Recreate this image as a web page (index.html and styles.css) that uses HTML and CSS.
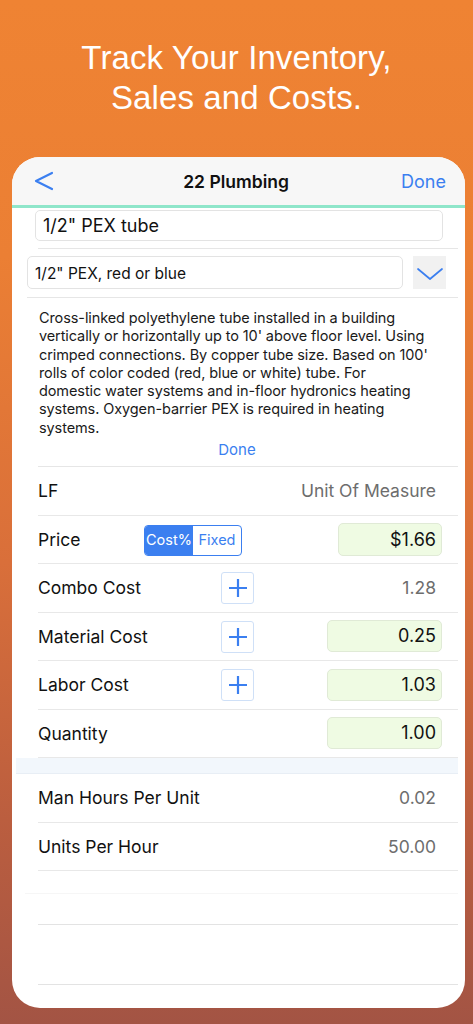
FILE: index.html
```html
<!DOCTYPE html>
<html>
<head>
<meta charset="utf-8">
<link rel="stylesheet" href="styles.css">
</head>
<body>
<div class="page">
  <h1 class="headline">Track Your Inventory,<br>Sales and Costs.</h1>
  <div class="card">
    <div class="nav">
      <svg class="back" width="22" height="22" viewBox="0 0 22 22"><path d="M19 3 L3 11 L19 19" fill="none" stroke="#3b7ff0" stroke-width="2.2" stroke-linecap="round" stroke-linejoin="round"/></svg>
      <div class="nav-title">22 Plumbing</div>
      <div class="nav-done">Done</div>
    </div>
    <div class="sec sec-name">
      <div class="namebox">1/2" PEX tube</div>
    </div>
    <div class="sec sec-sub">
      <div class="subbox">1/2" PEX, red or blue</div>
      <div class="chev"><svg width="28" height="16" viewBox="0 0 28 16"><path d="M2 3 L14 13 L26 3" fill="none" stroke="#3b7ff0" stroke-width="1.7" stroke-linecap="round" stroke-linejoin="round"/></svg></div>
    </div>
    <div class="sec sec-desc">
      <p class="desc">Cross-linked polyethylene tube installed in a building<br>vertically or horizontally up to 10' above floor level. Using<br>crimped connections. By copper tube size. Based on 100'<br>rolls of color coded (red, blue or white) tube. For<br>domestic water systems and in-floor hydronics heating<br>systems. Oxygen-barrier PEX is required in heating<br>systems.</p>
      <div class="desc-done">Done</div>
    </div>
    <div class="row">
      <span class="label">LF</span>
      <span class="value">Unit Of Measure</span>
    </div>
    <div class="row">
      <span class="label">Price</span>
      <div class="seg"><span class="seg-on">Cost%</span><span class="seg-off">Fixed</span></div>
      <span class="input input-price">$1.66</span>
    </div>
    <div class="row">
      <span class="label">Combo Cost</span>
      <span class="plus"><svg width="20" height="20" viewBox="0 0 20 20"><path d="M10 1 V19 M1 10 H19" stroke="#3b7ff0" stroke-width="2.2"/></svg></span>
      <span class="value">1.28</span>
    </div>
    <div class="row">
      <span class="label">Material Cost</span>
      <span class="plus"><svg width="20" height="20" viewBox="0 0 20 20"><path d="M10 1 V19 M1 10 H19" stroke="#3b7ff0" stroke-width="2.2"/></svg></span>
      <span class="input">0.25</span>
    </div>
    <div class="row">
      <span class="label">Labor Cost</span>
      <span class="plus"><svg width="20" height="20" viewBox="0 0 20 20"><path d="M10 1 V19 M1 10 H19" stroke="#3b7ff0" stroke-width="2.2"/></svg></span>
      <span class="input">1.03</span>
    </div>
    <div class="row">
      <span class="label">Quantity</span>
      <span class="input">1.00</span>
    </div>
    <div class="band"></div>
    <div class="row">
      <span class="label">Man Hours Per Unit</span>
      <span class="value">0.02</span>
    </div>
    <div class="row">
      <span class="label">Units Per Hour</span>
      <span class="value">50.00</span>
    </div>
    <div class="empty empty-a"></div>
    <div class="empty empty-b"></div>
    <div class="empty empty-c"></div>
  </div>
</div>
</body>
</html>
```
FILE: styles.css
```css
* { box-sizing: border-box; }
html, body { margin: 0; padding: 0; }
body {
  width: 473px;
  height: 1024px;
  overflow: hidden;
  font-family: Inter, "Noto Sans", "Liberation Sans", sans-serif;
  background: linear-gradient(180deg, #ef8333 0%, #eb7f34 25%, #d96f3a 55%, #bb5e3f 80%, #a35444 100%);
}
.page {
  padding-top: 38px;
}
.headline {
  margin: 0;
  color: #fff;
  font-family: "Liberation Sans", Arial, sans-serif;
  font-weight: normal;
  font-size: 33px;
  line-height: 40px;
  text-align: center;
  letter-spacing: 0.1px;
}
.card {
  margin: 39px 0 0 12px;
  width: 453px;
  height: 851px;
  background: #fff;
  border-radius: 28px;
  overflow: hidden;
}
.nav {
  height: 51px;
  background: #f7f7f7;
  border-bottom: 3px solid #8fe6ca;
  display: flex;
  align-items: center;
  position: relative;
  padding: 0 19px 0 21px;
}
.back { display: block; }
.nav-title {
  flex: 1;
  text-align: center;
  font-size: 17.5px;
  font-weight: 600;
  color: #111;
  padding-left: 16px;
}
.nav-done {
  font-size: 18px;
  color: #3b7ff0;
}
.sec {
  margin-left: 26px;
  margin-right: 7px;
  border-bottom: 1px solid #e6e6e6;
}
.sec-name {
  height: 41px;
  padding-top: 2px;
}
.namebox {
  margin-left: -3px;
  width: 408px;
  height: 31px;
  border: 1px solid #e3e3e3;
  border-radius: 5px;
  font-size: 18px;
  line-height: 29px;
  padding-left: 7px;
  color: #111;
}
.sec-sub {
  height: 49px;
  padding-top: 7px;
  display: flex;
  gap: 10px;
  margin-left: 15px;
}
.subbox {
  width: 376px;
  height: 33px;
  border: 1px solid #e3e3e3;
  border-radius: 5px;
  font-size: 15.5px;
  line-height: 33px;
  padding-left: 7px;
  color: #111;
}
.chev {
  width: 33px;
  height: 33px;
  background: #f1f1f1;
  display: flex;
  align-items: center;
  justify-content: center;
  padding-top: 2px;
}
.sec-desc {
  height: 169px;
  padding-top: 11px;
  margin-left: 26px;
}
.desc {
  margin: 0 0 0 1px;
  font-size: 14.5px;
  line-height: 18.3px;
  color: #1a1a1a;
  white-space: nowrap;
  letter-spacing: -0.1px;
}
.desc-done {
  text-align: center;
  color: #3b7ff0;
  font-size: 15px;
  line-height: 20px;
  margin-top: 3px;
  padding-right: 22px;
}
.row {
  margin-left: 26px;
  margin-right: 7px;
  height: 48.5px;
  border-bottom: 1px solid #e8e8e8;
  display: flex;
  align-items: center;
  position: relative;
}
.label {
  font-size: 17.5px;
  color: #111;
  flex: 1;
}
.value {
  font-size: 17.5px;
  color: #6d6d6d;
  padding-right: 22px;
}
.input {
  width: 115px;
  height: 32px;
  background: #effbe3;
  border: 1px solid #e0ead6;
  border-radius: 5px;
  text-align: right;
  padding-right: 5px;
  font-size: 18px;
  line-height: 30px;
  color: #111;
  margin-right: 16px;
}
.input-price {
  width: 104px;
  height: 33px;
  line-height: 31px;
}
.seg {
  position: absolute;
  left: 106px;
  top: 9px;
  width: 98px;
  height: 31px;
  border: 1.5px solid #3b7ff0;
  border-radius: 4px;
  display: flex;
  overflow: hidden;
  font-size: 14.5px;
  line-height: 28px;
}
.seg-on {
  width: 48px;
  background: #3b7ff0;
  color: #fff;
  text-align: center;
}
.seg-off {
  flex: 1;
  color: #3b7ff0;
  text-align: center;
}
.plus {
  position: absolute;
  left: 183px;
  top: 8px;
  width: 33px;
  height: 32px;
  border: 1px solid #cfe0f7;
  border-radius: 3px;
  display: flex;
  align-items: center;
  justify-content: center;
}
.plus svg { display: block; }
.band {
  margin-left: 4px;
  margin-right: 7px;
  height: 16px;
  background: #f2f7fc;
  border-bottom: 1px solid #e8eef5;
}
.empty {
  margin-left: 26px;
  margin-right: 7px;
}
.empty-a {
  height: 23px;
  border-bottom: 1px solid #f6f6f6;
  margin-left: 13px;
}
.empty-b {
  height: 31px;
  border-bottom: 1px solid #e3e3e3;
}
.empty-c {
  height: 60px;
  border-bottom: 1px solid #e3e3e3;
}
```
